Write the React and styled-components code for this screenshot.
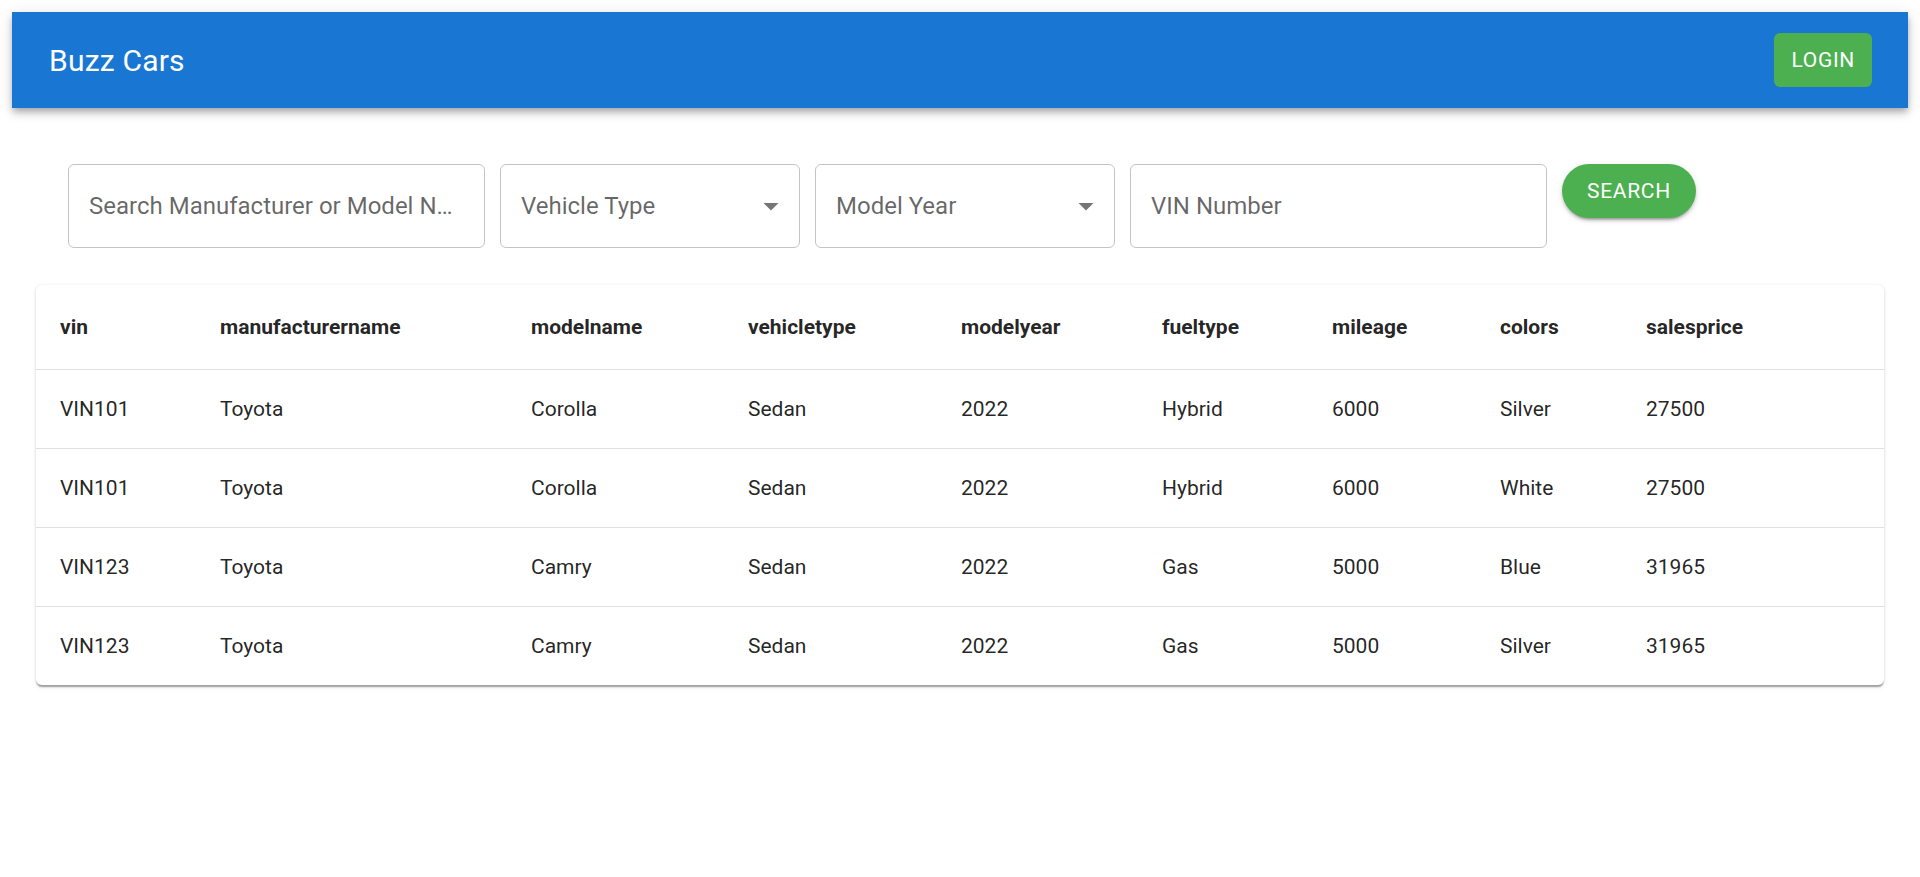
import styled, { createGlobalStyle } from "styled-components";

const GlobalStyle = createGlobalStyle`
  body {
    margin: 0;
    background: #fff;
    font-family: Roboto, "Liberation Sans", sans-serif;
    color: rgba(0, 0, 0, 0.87);
  }
  * {
    box-sizing: border-box;
  }
`;

const Page = styled.div`
  padding: 12px;
`;

const AppBar = styled.header`
  height: 96px;
  background-color: #1976d2;
  color: #fff;
  display: flex;
  justify-content: space-between;
  align-items: center;
  padding: 0 36px 0 37px;
  box-shadow: 0px 3px 6px -1.5px rgba(0, 0, 0, 0.2),
    0px 6px 7.5px 0px rgba(0, 0, 0, 0.14),
    0px 1.5px 15px 0px rgba(0, 0, 0, 0.12);
`;

const Title = styled.div`
  font-size: 30px;
  font-weight: 400;
  letter-spacing: 0.2px;
`;

const GreenButton = styled.button`
  height: 54px;
  border: none;
  background-color: #4caf50;
  color: #fff;
  font-family: Roboto, "Liberation Sans", sans-serif;
  font-size: 21px;
  font-weight: 400;
  letter-spacing: 0.7px;
  text-transform: uppercase;
  cursor: pointer;
  padding: 0 ${({ pill }) => (pill ? "25px" : "17px")};
  border-radius: ${({ pill }) => (pill ? "27px" : "6px")};
  box-shadow: ${({ pill }) =>
    pill
      ? "0px 4.5px 1.5px -3px rgba(0,0,0,0.2), 0px 3px 3px 0px rgba(0,0,0,0.14), 0px 1.5px 7.5px 0px rgba(0,0,0,0.12)"
      : "none"};
`;

const SearchRow = styled.div`
  display: flex;
  align-items: flex-start;
  gap: 15px;
  margin-top: 56px;
  padding-left: 56px;
`;

const TextInput = styled.input`
  width: ${({ w }) => w}px;
  height: 84px;
  border: 1px solid #c4c4c4;
  border-radius: 6px;
  padding: 0 21px 0 20px;
  font-family: Roboto, "Liberation Sans", sans-serif;
  font-size: 24px;
  color: rgba(0, 0, 0, 0.87);
  outline: none;
  text-overflow: ellipsis;

  &::placeholder {
    color: rgba(0, 0, 0, 0.6);
    opacity: 1;
    text-overflow: ellipsis;
  }
`;

const SelectBox = styled.div`
  width: ${({ w }) => w}px;
  height: 84px;
  border: 1px solid #c4c4c4;
  border-radius: 6px;
  padding: 0 10px 0 20px;
  display: flex;
  align-items: center;
  justify-content: space-between;
  font-size: 24px;
  color: rgba(0, 0, 0, 0.6);
  cursor: pointer;
`;

const ArrowIcon = styled.svg`
  width: 36px;
  height: 36px;
  fill: rgba(0, 0, 0, 0.54);
`;

const TablePaper = styled.div`
  margin: 37px 24px 0 24px;
  background: #fff;
  border-radius: 6px;
  overflow: hidden;
  box-shadow: 0px 3px 1.5px -1.5px rgba(0, 0, 0, 0.2),
    0px 1.5px 1.5px 0px rgba(0, 0, 0, 0.14),
    0px 1.5px 4.5px 0px rgba(0, 0, 0, 0.12);
`;

const Table = styled.table`
  width: 100%;
  border-collapse: collapse;
  table-layout: fixed;
`;

const HeadCell = styled.th`
  text-align: left;
  font-size: 21px;
  font-weight: 700;
  line-height: 36px;
  padding: 24px;
  border-bottom: 1px solid #e0e0e0;
  color: rgba(0, 0, 0, 0.87);
`;

const Cell = styled.td`
  font-size: 21px;
  font-weight: 400;
  line-height: 30px;
  padding: 24px;
  border-bottom: ${({ last }) => (last ? "none" : "1px solid #e0e0e0")};
  color: rgba(0, 0, 0, 0.87);
`;

const columns = [
  { key: "vin", width: 160 },
  { key: "manufacturername", width: 311 },
  { key: "modelname", width: 217 },
  { key: "vehicletype", width: 213 },
  { key: "modelyear", width: 201 },
  { key: "fueltype", width: 170 },
  { key: "mileage", width: 168 },
  { key: "colors", width: 146 },
  { key: "salesprice" },
];

const rows = [
  ["VIN101", "Toyota", "Corolla", "Sedan", "2022", "Hybrid", "6000", "Silver", "27500"],
  ["VIN101", "Toyota", "Corolla", "Sedan", "2022", "Hybrid", "6000", "White", "27500"],
  ["VIN123", "Toyota", "Camry", "Sedan", "2022", "Gas", "5000", "Blue", "31965"],
  ["VIN123", "Toyota", "Camry", "Sedan", "2022", "Gas", "5000", "Silver", "31965"],
];

function Select({ label, w }) {
  return (
    <SelectBox w={w}>
      <span>{label}</span>
      <ArrowIcon viewBox="0 0 24 24">
        <path d="M7 10l5 5 5-5z" />
      </ArrowIcon>
    </SelectBox>
  );
}

export default function App() {
  return (
    <>
      <GlobalStyle />
      <Page>
        <AppBar>
          <Title>Buzz Cars</Title>
          <GreenButton>Login</GreenButton>
        </AppBar>

        <SearchRow>
          <TextInput w={417} placeholder="Search Manufacturer or Model Name" />
          <Select label="Vehicle Type" w={300} />
          <Select label="Model Year" w={300} />
          <TextInput w={417} placeholder="VIN Number" />
          <GreenButton pill>Search</GreenButton>
        </SearchRow>

        <TablePaper>
          <Table>
            <colgroup>
              {columns.map((c) => (
                <col key={c.key} style={c.width ? { width: c.width } : undefined} />
              ))}
            </colgroup>
            <thead>
              <tr>
                {columns.map((c) => (
                  <HeadCell key={c.key}>{c.key}</HeadCell>
                ))}
              </tr>
            </thead>
            <tbody>
              {rows.map((row, i) => (
                <tr key={i}>
                  {row.map((v, j) => (
                    <Cell key={j} last={i === rows.length - 1}>
                      {v}
                    </Cell>
                  ))}
                </tr>
              ))}
            </tbody>
          </Table>
        </TablePaper>
      </Page>
    </>
  );
}
